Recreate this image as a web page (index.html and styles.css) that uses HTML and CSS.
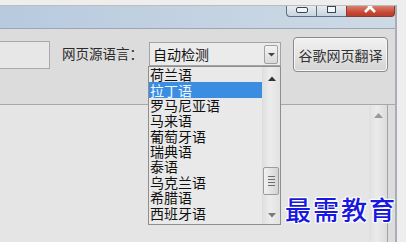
FILE: index.html
```html
<!DOCTYPE html>
<html lang="zh-CN">
<head>
<meta charset="utf-8">
<title>网页翻译</title>
<link rel="stylesheet" href="styles.css">
</head>
<body>
<div class="window">
  <div class="titlebar">
    <div class="caption">
      <div class="cap-btn cap-min"><span class="min-glyph"></span></div>
      <div class="cap-btn cap-max"><span class="max-glyph"></span></div>
      <div class="cap-btn cap-close">
        <svg width="14" height="10" viewBox="0 0 14 10"><path d="M1 -4 L11 6 M11 -4 L1 6" stroke="#fff" stroke-width="2.6" fill="none"/></svg>
      </div>
    </div>
  </div>
  <div class="client">
    <div class="toolbar">
      <div class="textbox"></div>
      <span class="label">网页源语言：</span>
      <div class="combo">
        <span class="combo-text">自动检测</span>
        <span class="combo-btn"><svg width="7" height="5" viewBox="0 0 7 5"><path d="M0 1 H7 L3.5 4.5 Z" fill="#444"/></svg></span>
      </div>
      <button class="translate">谷歌网页翻译</button>
    </div>
    <div class="output">
      <div class="output-box">
        <div class="output-body"></div>
        <div class="vscroll"><svg width="9" height="5" viewBox="0 0 9 5"><path d="M0 5 L4.5 0 L9 5 Z" fill="#9a9a9a"/></svg></div>
      </div>
    </div>
  </div>
</div>

<div class="dropdown">
  <ul class="items">
    <li>荷兰语</li>
    <li class="selected">拉丁语</li>
    <li>罗马尼亚语</li>
    <li>马来语</li>
    <li>葡萄牙语</li>
    <li>瑞典语</li>
    <li>泰语</li>
    <li>乌克兰语</li>
    <li>希腊语</li>
    <li>西班牙语</li>
  </ul>
  <div class="list-scroll">
    <div class="ls-up"><svg width="8" height="5" viewBox="0 0 8 5"><path d="M0 5 L4 0.5 L8 5 Z" fill="#333"/></svg></div>
    <div class="ls-track">
      <div class="ls-thumb"><span></span><span></span><span></span><span></span></div>
    </div>
    <div class="ls-down"><svg width="8" height="5" viewBox="0 0 8 5"><path d="M0 0 H8 L4 4.5 Z" fill="#7a7a7a"/></svg></div>
  </div>
</div>

<div class="watermark">最需教育</div>
</body>
</html>
```

FILE: styles.css
```css
* { box-sizing: border-box; }
html, body {
  margin: 0;
  padding: 0;
}
body {
  width: 406px;
  height: 242px;
  overflow: hidden;
  background: #eeeeee;
  font-family: "Noto Sans CJK SC", "Noto Sans", sans-serif;
  position: relative;
}

.window {
  margin-top: 5px;
  width: 397px;
  height: 237px;
  border-top: 1px solid #bdbdbd;
  border-right: 2px solid #a9aeb4;
  background: #dcdcdc;
  display: flex;
  flex-direction: column;
}

.titlebar {
  height: 23px;
  flex: none;
  background: linear-gradient(to right, #b7cade 0%, #c4d3e2 55%, #cddae6 100%);
  border-bottom: 1px solid #98a6b5;
  display: flex;
  justify-content: flex-end;
  align-items: flex-start;
}
.caption {
  display: flex;
  height: 11px;
}
.cap-btn {
  height: 11px;
  border: 1px solid #5f6f80;
  border-top: none;
  display: flex;
  align-items: flex-end;
  justify-content: center;
  overflow: hidden;
}
.cap-min {
  width: 30px;
  border-radius: 0 0 0 4px;
  background: linear-gradient(#e6ecf2, #c9d4df);
  border-right: none;
}
.cap-max {
  width: 30px;
  background: linear-gradient(#e6ecf2, #c9d4df);
  border-right: none;
}
.cap-close {
  width: 49px;
  border-radius: 0 0 4px 0;
  border-color: #8a3a2e;
  background: linear-gradient(#d9826f, #c4432f 70%, #b8402e);
  align-items: flex-start;
}
.min-glyph {
  width: 12px;
  height: 6px;
  margin-bottom: 3px;
  border: 1px solid #3a4552;
  border-radius: 2px;
  background: #f4f6f8;
}
.max-glyph {
  width: 9px;
  height: 8px;
  margin-bottom: 3px;
  border: 1px solid #3a4552;
  border-top-width: 2px;
  background: #f4f6f8;
}

.client {
  flex: 1;
  display: flex;
  flex-direction: column;
  background: #dcdcdc;
}

.toolbar {
  height: 75px;
  flex: none;
  display: flex;
  align-items: flex-start;
  padding-top: 8px;
}
.textbox {
  width: 50px;
  height: 28px;
  margin-top: 4px;
  border: 1px solid #a9a9a9;
  border-left: none;
  background: #e7e7e7;
}
.label {
  width: 87px;
  margin-left: 12px;
  margin-top: 6px;
  font-size: 13.5px;
  line-height: 20px;
  color: #2b2b2b;
  white-space: nowrap;
}
.combo {
  width: 132px;
  height: 24px;
  margin-top: 5px;
  border: 1px solid #a4a4a4;
  background: #ebebeb;
  display: flex;
  align-items: center;
}
.combo-text {
  padding-left: 3px;
  font-size: 14px;
  line-height: 22px;
  color: #111;
}
.combo-btn {
  margin-left: auto;
  margin-right: 2px;
  width: 14px;
  height: 19px;
  border: 1px solid #a0a0a0;
  border-radius: 2px;
  background: linear-gradient(#f3f3f3, #d9d9d9);
  display: flex;
  align-items: center;
  justify-content: center;
}
.combo-btn svg { display: block; }

.translate {
  margin-left: 12px;
  width: 95px;
  height: 35px;
  padding: 0;
  border: 1px solid #8a8a8a;
  border-radius: 4px;
  background: linear-gradient(#f2f2f2, #e4e4e4 50%, #d3d3d3);
  box-shadow: inset 0 0 0 1px #f7f7f7;
  font-family: "Noto Sans CJK SC", sans-serif;
  font-size: 14px;
  color: #333;
  line-height: 20px;
}

.output {
  flex: 1;
  border-top: 1px solid #a8a8a8;
  padding-right: 7px;
  display: flex;
  flex-direction: column;
}
.output-box {
  flex: 1;
  display: flex;
  border-right: 1px solid #a4a4a4;
  background: #e5e5e5;
}
.output-body { flex: 1; }
.vscroll {
  width: 18px;
  background: linear-gradient(to right, #e2e2e2, #ebebeb 40%, #dcdcdc);
  border-left: 1px solid #e0e0e0;
  display: flex;
  justify-content: center;
  padding-top: 8px;
}
.vscroll svg { display: block; }

.dropdown {
  position: absolute;
  left: 148px;
  top: 66px;
  width: 133px;
  height: 159px;
  border: 1px solid #8e8e8e;
  background: #e9e9e9;
  display: flex;
}
.items {
  list-style: none;
  margin: 0;
  padding: 0;
  flex: 1;
}
.items li {
  font-size: 14px;
  line-height: 15.4px;
  height: 15.4px;
  padding-left: 1px;
  color: #111;
  white-space: nowrap;
}
.items li.selected {
  background: #3a8de0;
  color: #f2f8ff;
  height: 16px;
  line-height: 16px;
  margin-bottom: -0.6px;
}
.list-scroll {
  width: 18px;
  flex: none;
  display: flex;
  flex-direction: column;
  background: linear-gradient(to right, #e0e0e0, #ececec 40%, #e2e2e2);
  border-left: 1px solid #dedede;
}
.ls-up {
  height: 22px;
  display: flex;
  align-items: center;
  justify-content: center;
}
.ls-track {
  flex: 1;
  display: flex;
  flex-direction: column;
}
.ls-thumb {
  margin-top: 78px;
  margin-left: 0;
  width: 16px;
  height: 28px;
  border: 1px solid #9c9c9c;
  border-radius: 2px;
  background: linear-gradient(to right, #f1f1f1, #e3e3e3 50%, #d4d4d4);
  display: flex;
  flex-direction: column;
  align-items: center;
  justify-content: center;
  gap: 2px;
}
.ls-thumb span {
  display: block;
  width: 7px;
  height: 1px;
  background: #6e6e6e;
}
.ls-down {
  height: 18px;
  display: flex;
  align-items: center;
  justify-content: center;
}
.ls-up svg, .ls-down svg { display: block; }

.watermark {
  position: absolute;
  left: 285px;
  top: 196px;
  font-family: "Noto Sans CJK SC", sans-serif;
  font-size: 26px;
  line-height: 26px;
  letter-spacing: 2px;
  font-weight: 500;
  color: #1818e0;
  white-space: nowrap;
  text-shadow: 0 0 2px #fff, 0 0 2px #fff, 1px 1px 1px #fff, -1px -1px 1px #fff, 1px -1px 1px #fff, -1px 1px 1px #fff;
}
```
